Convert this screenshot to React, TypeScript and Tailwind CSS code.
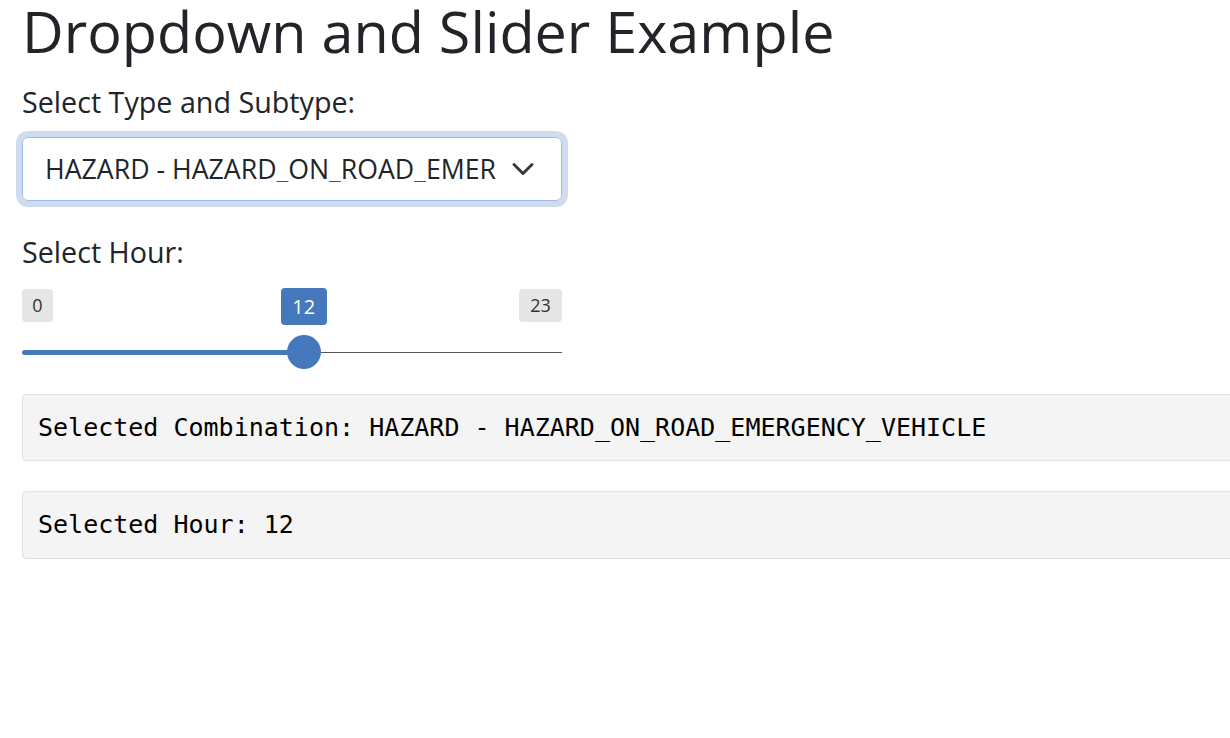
import { useState } from "react";

const OPTIONS = [
  "HAZARD - HAZARD_ON_ROAD_EMERGENCY_VEHICLE",
  "HAZARD - HAZARD_ON_ROAD_POT_HOLE",
  "JAM - JAM_HEAVY_TRAFFIC",
];

const MIN_HOUR = 0;
const MAX_HOUR = 23;

function HourSlider({ value }: { value: number }) {
  const pct = ((value - MIN_HOUR) / (MAX_HOUR - MIN_HOUR)) * 100;
  return (
    <div className="mt-[15px] flex w-[540px] flex-col gap-[10px]">
      {/* min / max labels, current value floats above the handle */}
      <div className="relative flex h-[37px] items-start justify-between pt-px text-[18px] text-[#333]">
        <span className="flex h-[33px] w-[31px] items-center justify-center rounded-[4px] bg-[#e6e6e6]">
          {MIN_HOUR}
        </span>
        <span className="flex h-[33px] w-[43px] items-center justify-center rounded-[4px] bg-[#e6e6e6]">
          {MAX_HOUR}
        </span>
        <span
          className="absolute top-0 flex h-[37px] w-[46px] -translate-x-1/2 items-center justify-center rounded-[4px] bg-[#4578bc] text-[20px] text-white"
          style={{ left: `${pct}%` }}
        >
          {value}
        </span>
      </div>
      <div className="relative flex h-[34px] items-center">
        <div className="h-px w-full bg-[#555]" />
        <div
          className="absolute left-0 h-[5px] rounded-l-full bg-[#4578bc]"
          style={{ width: `${pct}%` }}
        />
        <div
          className="absolute h-[34px] w-[34px] -translate-x-1/2 rounded-full bg-[#4578bc]"
          style={{ left: `${pct}%` }}
        />
      </div>
    </div>
  );
}

export default function App() {
  const [choice] = useState(OPTIONS[0]);
  const hour = 12;

  return (
    <div className="h-screen w-full overflow-hidden bg-white font-['Open_Sans',sans-serif] text-[#212529]">
      <div className="flex flex-col items-start px-[22px]">
        <h1 className="mt-[-4px] text-[57.5px] font-normal leading-[70px]">
          Dropdown and Slider Example
        </h1>

        <label className="mt-[15px] block text-[28.7px] leading-[42px]">
          Select Type and Subtype:
        </label>
        <div className="mt-[14px] w-[540px] rounded-[6px] outline outline-[6px] outline-[#cfdcee]">
          <div className="flex h-[64px] items-center rounded-[6px] border border-[#9dbae0] bg-white pl-[22px] pr-[26px]">
            <span className="w-[452px] overflow-hidden whitespace-nowrap text-[26.7px] leading-none">
              {choice}
            </span>
            <svg
              viewBox="0 0 16 16"
              className="ml-auto h-[24px] w-[24px]"
              fill="none"
              stroke="#343a40"
              strokeWidth="2"
              strokeLinecap="round"
              strokeLinejoin="round"
            >
              <path d="m2 5 6 6 6-6" />
            </svg>
          </div>
        </div>

        <label className="mt-[30px] block text-[28.7px] leading-[42px]">Select Hour:</label>
        <HourSlider value={hour} />

        <div className="mt-[25px] flex w-[1300px] flex-col gap-[30px] text-[25px] text-black">
          <pre className="flex h-[67px] items-center rounded-[4px] border border-[#e1e1e1] bg-[#f4f4f4] px-[15px] font-['DejaVu_Sans_Mono',monospace]">
            Selected Combination: {choice}
          </pre>
          <pre className="flex h-[68px] items-center rounded-[4px] border border-[#e1e1e1] bg-[#f4f4f4] px-[15px] font-['DejaVu_Sans_Mono',monospace]">
            Selected Hour: {hour}
          </pre>
        </div>
      </div>
    </div>
  );
}
